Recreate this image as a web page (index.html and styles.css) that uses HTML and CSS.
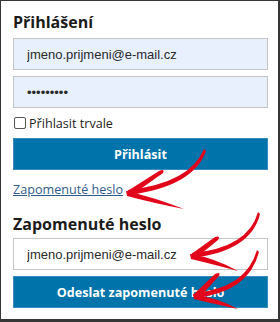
FILE: index.html
```html
<!DOCTYPE html>
<html lang="cs">
<head>
<meta charset="utf-8">
<title>Přihlášení</title>
<link rel="stylesheet" href="styles.css">
</head>
<body>
<div class="frame">
  <section class="panel">
    <h2 class="title title-login">Přihlášení</h2>
    <input class="field filled" type="text" value="jmeno.prijmeni@e-mail.cz">
    <input class="field filled" type="password" value="123456789">
    <label class="remember"><input class="check" type="checkbox">Přihlasit trvale</label>
    <button class="btn" type="button">Přihlásit</button>
    <a class="forgot" href="#">Zapomenuté heslo</a>
  </section>
  <section class="panel panel-forgot">
    <h2 class="title title-forgot">Zapomenuté heslo</h2>
    <input class="field" type="text" value="jmeno.prijmeni@e-mail.cz">
    <button class="btn" type="button">Odeslat zapomenuté heslo</button>
  </section>
  <svg class="arrows" width="280" height="322" viewBox="0 0 280 322" aria-hidden="true">
    <g class="ink">
      <path d="M204,149 Q190,183 128,190 L128,195 Q193,187 206,151 Z"/>
      <path d="M126,192 L159,171 Q165,168 163,173 L132,195 Z"/>
      <path d="M126,191 Q153,197 184,209 Q153,203 127,196 Z"/>

      <path d="M258,212 Q248,248 192,253 L192,258 Q251,251 260,214 Z"/>
      <path d="M190,255 L215,237 Q221,235 218,240 L196,258 Z"/>
      <path d="M190,254 Q215,258 238,271 Q212,264 191,259 Z"/>

      <path d="M257,250 Q246,288 195,293 L195,298 Q249,292 259,252 Z"/>
      <path d="M193,295 L215,274 Q221,271 219,276 L199,298 Z"/>
      <path d="M193,294 Q218,298 238,309 Q214,304 194,299 Z"/>
    </g>
  </svg>
</div>
</body>
</html>
```
FILE: styles.css
```css
html, body {
  margin: 0;
  padding: 0;
  background: #fff;
}
body {
  width: 280px;
  height: 322px;
  font-family: "Open Sans", "Noto Sans", sans-serif;
}
.frame {
  position: relative;
  box-sizing: border-box;
  width: 280px;
  height: 322px;
  border-style: solid;
  border-color: #363636;
  border-width: 1px 2px 3px 1px;
  padding: 11px 10px 0 12px;
  display: flex;
  flex-direction: column;
}
.panel {
  display: flex;
  flex-direction: column;
}
.panel-forgot {
  margin-top: 16px;
}
.title {
  margin: 0;
  font-size: 16px;
  line-height: 20px;
  font-weight: 700;
  color: #1b1b1b;
}
.title-login {
  margin-bottom: 6px;
}
.title-forgot {
  margin-bottom: 4px;
}
.field {
  display: block;
  box-sizing: border-box;
  width: 100%;
  height: 32px;
  margin: 0 0 6px;
  border: 1px solid #c6c6c6;
  padding: 0 13px;
  font: 13px "Liberation Sans", Arial, sans-serif;
  color: #2a2a2a;
  background: #fff;
  outline: none;
}
.filled {
  background: #e8f0fe;
}
.remember {
  display: flex;
  align-items: center;
  height: 18px;
  margin-bottom: 6px;
  font-size: 12.6px;
  color: #222;
}
.check {
  appearance: none;
  -webkit-appearance: none;
  box-sizing: border-box;
  width: 12px;
  height: 12px;
  margin: 0 3px 0 1px;
  border: 1px solid #555;
  border-radius: 2px;
  background: #fff;
}
.btn {
  display: block;
  box-sizing: border-box;
  width: 100%;
  height: 32px;
  margin: 0;
  padding: 0;
  border: 1px solid #3a8bbd;
  background: #0073aa;
  color: #fff;
  font: 700 12.6px "Open Sans", sans-serif;
}
.forgot {
  align-self: flex-start;
  margin-top: 12px;
  font-size: 12.6px;
  line-height: 16px;
  color: #2f5b8c;
  text-decoration: underline;
}
.arrows {
  position: absolute;
  left: -1px;
  top: -1px;
  pointer-events: none;
}
.ink path {
  fill: #e2061a;
}
```
